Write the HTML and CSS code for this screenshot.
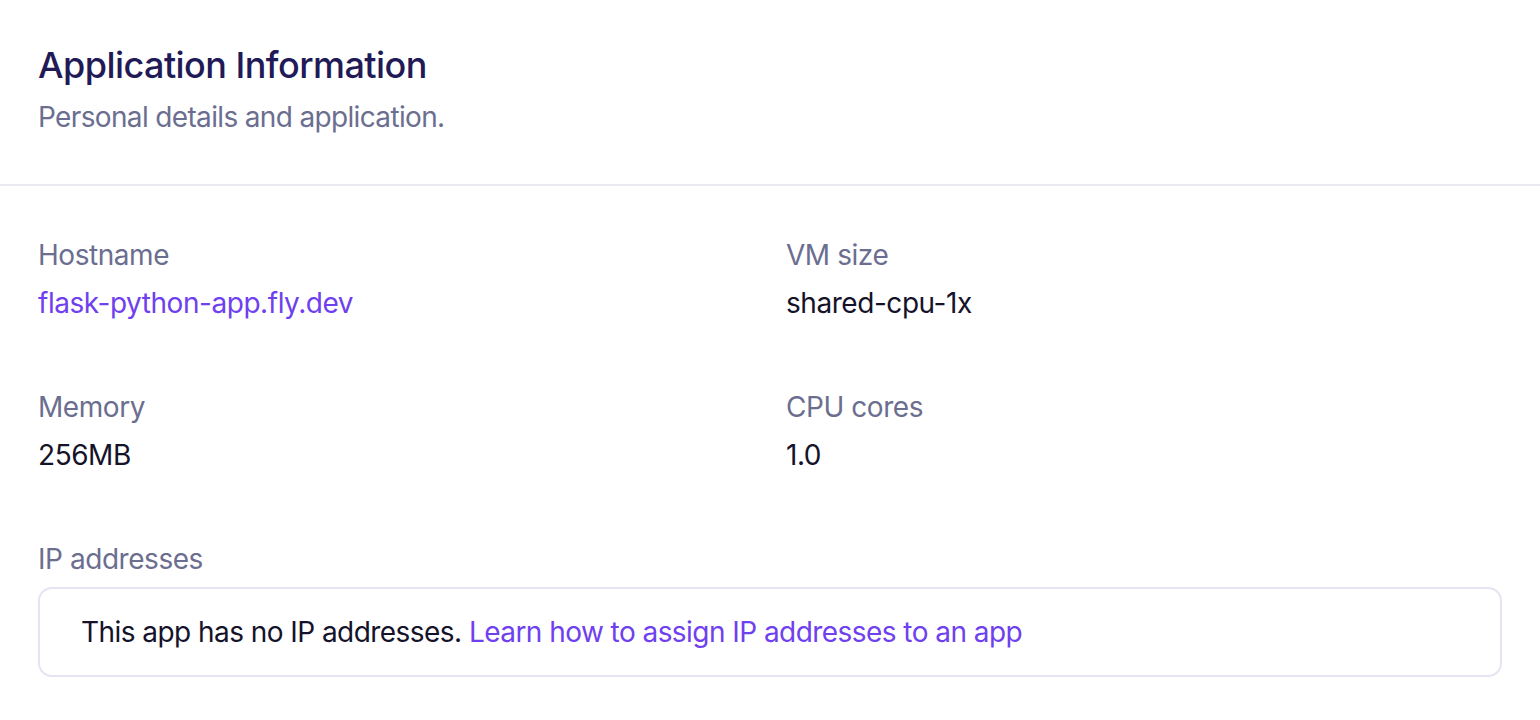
FILE: index.html
```html
<!DOCTYPE html>
<html lang="en">
<head>
<meta charset="utf-8">
<title>Application Information</title>
<link rel="stylesheet" href="styles.css">
</head>
<body>
<section class="panel">
  <header class="panel-header">
    <h1 class="panel-title">Application Information</h1>
    <p class="panel-subtitle">Personal details and application.</p>
  </header>
  <dl class="details">
    <div class="field">
      <dt class="label">Hostname</dt>
      <dd class="value"><a class="link" href="#">flask-python-app.fly.dev</a></dd>
    </div>
    <div class="field">
      <dt class="label">VM size</dt>
      <dd class="value">shared-cpu-1x</dd>
    </div>
    <div class="field">
      <dt class="label">Memory</dt>
      <dd class="value">256MB</dd>
    </div>
    <div class="field">
      <dt class="label">CPU cores</dt>
      <dd class="value">1.0</dd>
    </div>
    <div class="field field-wide">
      <dt class="label">IP addresses</dt>
      <dd class="value">
        <div class="notice">This app has no IP addresses. <a class="link" href="#">Learn how to assign IP addresses to an app</a></div>
      </dd>
    </div>
  </dl>
</section>
</body>
</html>
```
FILE: styles.css
```css
* { box-sizing: border-box; }
html, body {
  margin: 0;
  padding: 0;
  background: #ffffff;
  font-family: "Inter", "Noto Sans", sans-serif;
}
.panel {
  width: 1540px;
}
.panel-header {
  padding: 37px 38px 47px;
  border-bottom: 2px solid #e8e9f1;
}
.panel-title {
  margin: 0;
  font-size: 36px;
  line-height: 56px;
  font-weight: 500;
  letter-spacing: -0.55px;
  color: #211a56;
}
.panel-subtitle {
  margin: 4px 0 0;
  font-size: 28px;
  line-height: 40px;
  letter-spacing: -0.65px;
  color: #6b6e8f;
}
.details {
  margin: 0;
  padding: 49px 38px 40px;
  display: grid;
  grid-template-columns: 1fr 1fr;
  column-gap: 32px;
  row-gap: 64px;
}
.field-wide {
  grid-column: 1 / -1;
}
.label {
  font-size: 28px;
  line-height: 40px;
  letter-spacing: -0.45px;
  color: #6b6e8f;
}
.value {
  margin: 8px 0 0;
  font-size: 28px;
  line-height: 40px;
  letter-spacing: -0.45px;
  color: #14132a;
}
.link {
  color: #6e40ee;
  text-decoration: none;
}
.notice {
  border: 2px solid #e4e5f0;
  border-radius: 14px;
  padding: 23px 41px;
  font-size: 28px;
  line-height: 40px;
  letter-spacing: -0.55px;
  color: #14132a;
}
```
